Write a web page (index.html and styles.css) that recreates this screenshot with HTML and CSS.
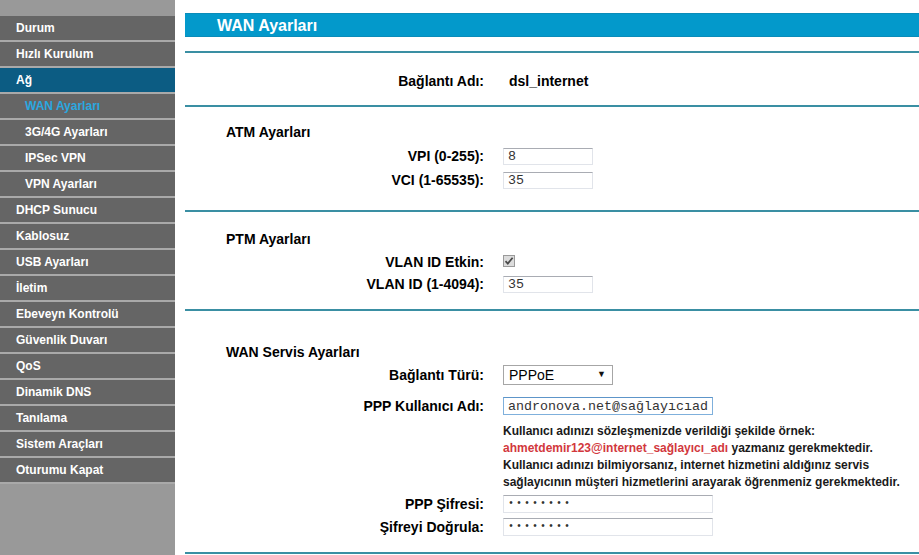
FILE: index.html
```html
<!DOCTYPE html>
<html lang="tr">
<head>
    <meta charset="utf-8">
    <title>WAN Ayarları</title>
    <link rel="stylesheet" href="styles.css">
</head>
<body>
    <div class="menu">
        <ul>
            <li>Durum</li>
            <li>Hızlı Kurulum</li>
            <li class="open">Ağ</li>
            <li class="sub current">WAN Ayarları</li>
            <li class="sub">3G/4G Ayarları</li>
            <li class="sub">IPSec VPN</li>
            <li class="sub">VPN Ayarları</li>
            <li>DHCP Sunucu</li>
            <li>Kablosuz</li>
            <li>USB Ayarları</li>
            <li>İletim</li>
            <li>Ebeveyn Kontrolü</li>
            <li>Güvenlik Duvarı</li>
            <li>QoS</li>
            <li>Dinamik DNS</li>
            <li>Tanılama</li>
            <li>Sistem Araçları</li>
            <li>Oturumu Kapat</li>
        </ul>
    </div>

    <div class="main">
        <h1 class="title">WAN Ayarları</h1>

        <div class="section name">
            <div class="row">
                <label>Bağlantı Adı:</label>
                <span class="value">dsl_internet</span>
            </div>
        </div>

        <div class="section atm">
            <h2>ATM Ayarları</h2>
            <div class="row">
                <label for="vpi">VPI (0-255):</label>
                <input type="text" id="vpi" class="short" value="8">
            </div>
            <div class="row">
                <label for="vci">VCI (1-65535):</label>
                <input type="text" id="vci" class="short" value="35">
            </div>
        </div>

        <div class="section ptm">
            <h2>PTM Ayarları</h2>
            <div class="row">
                <label>VLAN ID Etkin:</label>
                <span class="check">
                    <svg width="12" height="12" viewBox="0 0 12 12">
                        <rect x="0.5" y="0.5" width="11" height="11" fill="#dcdcdc" stroke="#9a9a9a"/>
                        <path d="M2.5 6.2 L4.8 8.6 L9.6 2.8" fill="none" stroke="#4a4a4a" stroke-width="1.8"/>
                    </svg>
                </span>
            </div>
            <div class="row">
                <label for="vlan">VLAN ID (1-4094):</label>
                <input type="text" id="vlan" class="short" value="35">
            </div>
        </div>

        <div class="section wan">
            <h2>WAN Servis Ayarları</h2>
            <div class="row select-row">
                <label for="type">Bağlantı Türü:</label>
                <span class="select">
                    <select id="type">
                        <option>PPPoE</option>
                        <option>IPoE</option>
                        <option>Bridge</option>
                    </select>
                </span>
            </div>
            <div class="row user-row">
                <label for="user">PPP Kullanıcı Adı:</label>
                <input type="text" id="user" class="long focus" value="andronova.net@sağlayıcıadı">
            </div>
            <div class="row note-row">
                <span></span>
                <p class="note">
                    Kullanıcı adınızı sözleşmenizde verildiği şekilde örnek:<br>
                    <span class="red">ahmetdemir123@internet_sağlayıcı_adı</span> yazmanız gerekmektedir.<br>
                    Kullanıcı adınızı bilmiyorsanız, internet hizmetini aldığınız servis<br>
                    sağlayıcının müşteri hizmetlerini arayarak öğrenmeniz gerekmektedir.
                </p>
            </div>
            <div class="row pass-row">
                <label for="pass">PPP Şifresi:</label>
                <input type="password" id="pass" class="long" value="12345678">
            </div>
            <div class="row pass-row">
                <label for="pass2">Şifreyi Doğrula:</label>
                <input type="password" id="pass2" class="long" value="12345678">
            </div>
        </div>
    </div>
</body>
</html>
```

FILE: styles.css
```css
html, body {
    margin: 0;
    padding: 0;
    height: 100%;
}
body {
    display: flex;
    font-family: "Liberation Sans", Arial, sans-serif;
    background: #fff;
    color: #000;
    overflow: hidden;
}

/* left menu */
.menu {
    width: 175px;
    flex: none;
    min-height: 100vh;
    background: #999999;
    padding-top: 16px;
    box-sizing: border-box;
}
.menu ul {
    list-style: none;
    margin: 0;
    padding: 0;
}
.menu li {
    height: 24px;
    line-height: 24px;
    padding-left: 16px;
    background: #656565;
    border-bottom: 2px solid #a9a9a9;
    color: #fff;
    font-size: 12px;
    font-weight: bold;
}
.menu li.open {
    background: #0c5c83;
}
.menu li.sub {
    padding-left: 25px;
}
.menu li.current {
    color: #2aa8e0;
}

/* content */
.main {
    flex: 1;
    padding: 13px 0 0 10px;
}
.title {
    margin: 0 0 14px;
    height: 24px;
    line-height: 24px;
    padding-left: 32px;
    background: #0399cb;
    border-top: 1px solid #0a8cb9;
    border-bottom: 1px solid #0a8cb9;
    box-sizing: border-box;
    color: #fff;
    font-size: 16px;
    font-weight: bold;
}
.section {
    border-top: 2px solid #3a8fa3;
}
.section:last-child {
    border-bottom: 2px solid #3a8fa3;
}
.section h2 {
    margin: 0;
    height: 24px;
    line-height: 24px;
    padding-left: 41px;
    font-size: 14px;
    font-weight: bold;
}

.row {
    display: grid;
    grid-template-columns: 299px 1fr;
    column-gap: 19px;
    align-items: center;
    height: 24px;
}
.row label {
    text-align: right;
    font-size: 14px;
    font-weight: bold;
}
.value {
    padding-left: 6px;
    font-size: 14px;
    font-weight: bold;
}

.name {
    padding: 16px 0 12px;
}
.atm {
    padding: 13px 0 18px;
}
.ptm {
    padding: 15px 0 14px;
}
.ptm .row {
    height: 22px;
}
.wan {
    padding: 29px 0 14px;
}
.wan .select-row {
    height: 22px;
}
.wan .user-row {
    margin-top: 8px;
}
.wan .note-row {
    height: auto;
    margin: 5px 0 1px;
}
.wan .pass-row {
    height: 23px;
}

/* form fields */
input[type="text"],
input[type="password"] {
    box-sizing: border-box;
    margin: 0;
    padding: 0 4px;
    border: 1px solid #e1e4ea;
    border-top-color: #a9acb3;
    font-family: "Liberation Mono", "Courier New", monospace;
    font-size: 13.33px;
    color: #333;
    background: #fff;
    outline: none;
}
input.short {
    width: 90px;
    height: 17px;
}
input.long {
    width: 210px;
    height: 18px;
}
input[type="password"] {
    font-size: 10px;
    letter-spacing: 2px;
}
input.focus {
    border-color: #7fb0dc;
    border-top-color: #5d95c9;
}

.check {
    display: flex;
    height: 12px;
    margin-top: -2px;
}

.select {
    position: relative;
    display: inline-block;
    width: 110px;
    height: 20px;
}
.select select {
    appearance: none;
    -webkit-appearance: none;
    box-sizing: border-box;
    width: 110px;
    height: 20px;
    margin: 0;
    padding: 0 0 0 5px;
    border: 1px solid #a6a6a6;
    border-radius: 0;
    background: #fff;
    font-family: "Liberation Sans", Arial, sans-serif;
    font-size: 14px;
    color: #000;
}
.select::after {
    content: "▼";
    position: absolute;
    right: 7px;
    top: 4px;
    font-size: 9px;
    color: #111;
    pointer-events: none;
}

.note {
    margin: 0;
    padding-left: 0;
    font-size: 12px;
    font-weight: bold;
    line-height: 17px;
    color: #1a1a1a;
}
.note .red {
    color: #d2383d;
}
```
